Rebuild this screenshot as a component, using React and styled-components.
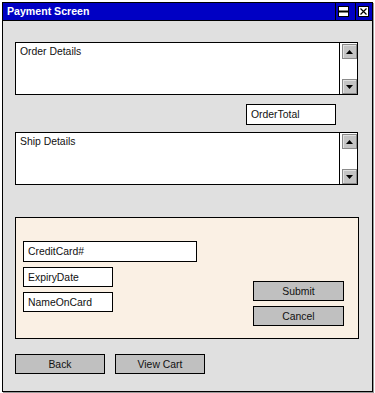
import React from 'react'
import styled, { createGlobalStyle } from 'styled-components'

const GlobalStyle = createGlobalStyle`
    html, body {
        margin: 0;
        padding: 0;
        background: #fff;
    }
    body {
        font-family: "Liberation Sans", Arial, sans-serif;
        font-size: 10.4px;
        color: #111;
    }
    * { box-sizing: border-box; }
`

const Page = styled.div`
    padding: 2px;
`

const Window = styled.div`
    display: flex;
    flex-direction: column;
    width: 371px;
    height: 390px;
    border: 1px solid #000;
    background-color: #e0e0e0;
    box-shadow: 1px 1px 0 #9a9a9a;
`

const TitleBar = styled.div`
    display: flex;
    align-items: stretch;
    height: 18px;
    background-color: #0000c4;
    border-bottom: 1px solid #000;
    flex-shrink: 0;
`

const Title = styled.h1`
    flex: 1;
    margin: 0;
    padding-left: 4px;
    font-size: 10.6px;
    font-weight: 700;
    color: #fff;
    line-height: 17px;
`

const TitleButton = styled.div`
    width: ${props => props.w}px;
    border-left: 1px solid #000;
    padding: 3px 0 0 2px;
    svg { display: block; }
`

const Content = styled.div`
    display: flex;
    flex-direction: column;
    padding: 21px 14px 0 12px;
`

const ListBox = styled.div`
    display: flex;
    height: 53px;
    margin-top: ${props => props.top || 0}px;
    background-color: #fff;
    border: 1px solid #000;
`

const ListText = styled.div`
    flex: 1;
    padding: 3px 0 0 4px;
    line-height: 12px;
`

const ScrollBar = styled.div`
    display: flex;
    flex-direction: column;
    justify-content: space-between;
    width: 18px;
    border-left: 1px solid #000;
    padding: 1px 0 0 2px;
`

const ScrollButton = styled.div`
    display: flex;
    align-items: center;
    justify-content: center;
    width: 15px;
    height: 15px;
    background-color: #c4c4c4;
    border: 1px solid #8a8a8a;
    box-shadow: inset 1px 1px 0 #e2e2e2;
`

const TotalRow = styled.div`
    display: flex;
    justify-content: flex-end;
    margin-top: 9px;
    padding-right: 22px;
`

const Field = styled.div`
    width: ${props => props.w}px;
    height: ${props => props.h || 20}px;
    display: flex;
    align-items: center;
    padding-left: 4px;
    background-color: #fff;
    border: 1px solid #000;
`

const PaymentPanel = styled.div`
    display: flex;
    justify-content: space-between;
    height: 122px;
    margin-top: 32px;
    margin-right: -1px;
    padding: 23px 14px 0 7px;
    background-color: #faf0e4;
    border: 1px solid #000;
`

const FieldColumn = styled.div`
    display: flex;
    flex-direction: column;
    gap: 5px;
`

const ButtonColumn = styled.div`
    display: flex;
    flex-direction: column;
    gap: 5px;
    padding-top: 40px;
`

const Button = styled.div`
    display: flex;
    align-items: center;
    justify-content: center;
    width: ${props => props.w || 91}px;
    height: 20px;
    background-color: #c0c0c0;
    border: 1px solid #000;
`

const Footer = styled.div`
    display: flex;
    gap: 10px;
    margin-top: 15px;
`

function MinMaxIcon() {
    return (
        <svg width="11" height="11" viewBox="0 0 11 11">
            <rect x="0.5" y="0.5" width="10" height="10" fill="#fff" stroke="#000" />
            <rect x="1" y="4.5" width="9" height="2" fill="#000" />
        </svg>
    )
}

function CloseIcon() {
    return (
        <svg width="11" height="11" viewBox="0 0 11 11">
            <rect x="0.5" y="0.5" width="10" height="10" fill="#fff" stroke="#000" />
            <path d="M2.5 2.5 L8.5 8.5 M8.5 2.5 L2.5 8.5" stroke="#000" strokeWidth="1.2" />
        </svg>
    )
}

function Arrow({ down }) {
    return (
        <svg width="7" height="4" viewBox="0 0 7 4">
            <path d={down ? 'M0 0 H7 L3.5 4 Z' : 'M0 4 H7 L3.5 0 Z'} fill="#000" />
        </svg>
    )
}

function DetailsBox({ label, top }) {
    return (
        <ListBox top={top}>
            <ListText>{label}</ListText>
            <ScrollBar>
                <ScrollButton><Arrow /></ScrollButton>
                <ScrollButton><Arrow down /></ScrollButton>
            </ScrollBar>
        </ListBox>
    )
}

export default function App() {
    return (
        <Page>
            <GlobalStyle />
            <Window>
                <TitleBar>
                    <Title>Payment Screen</Title>
                    <TitleButton w={20}><MinMaxIcon /></TitleButton>
                    <TitleButton w={17}><CloseIcon /></TitleButton>
                </TitleBar>
                <Content>
                    <DetailsBox label='Order Details' />
                    <TotalRow>
                        <Field w={90} h={21}>OrderTotal</Field>
                    </TotalRow>
                    <DetailsBox label='Ship Details' top={7} />
                    <PaymentPanel>
                        <FieldColumn>
                            <Field w={174} h={21}>CreditCard#</Field>
                            <Field w={90}>ExpiryDate</Field>
                            <Field w={90}>NameOnCard</Field>
                        </FieldColumn>
                        <ButtonColumn>
                            <Button>Submit</Button>
                            <Button>Cancel</Button>
                        </ButtonColumn>
                    </PaymentPanel>
                    <Footer>
                        <Button w={90}>Back</Button>
                        <Button w={90}>View Cart</Button>
                    </Footer>
                </Content>
            </Window>
        </Page>
    )
}
